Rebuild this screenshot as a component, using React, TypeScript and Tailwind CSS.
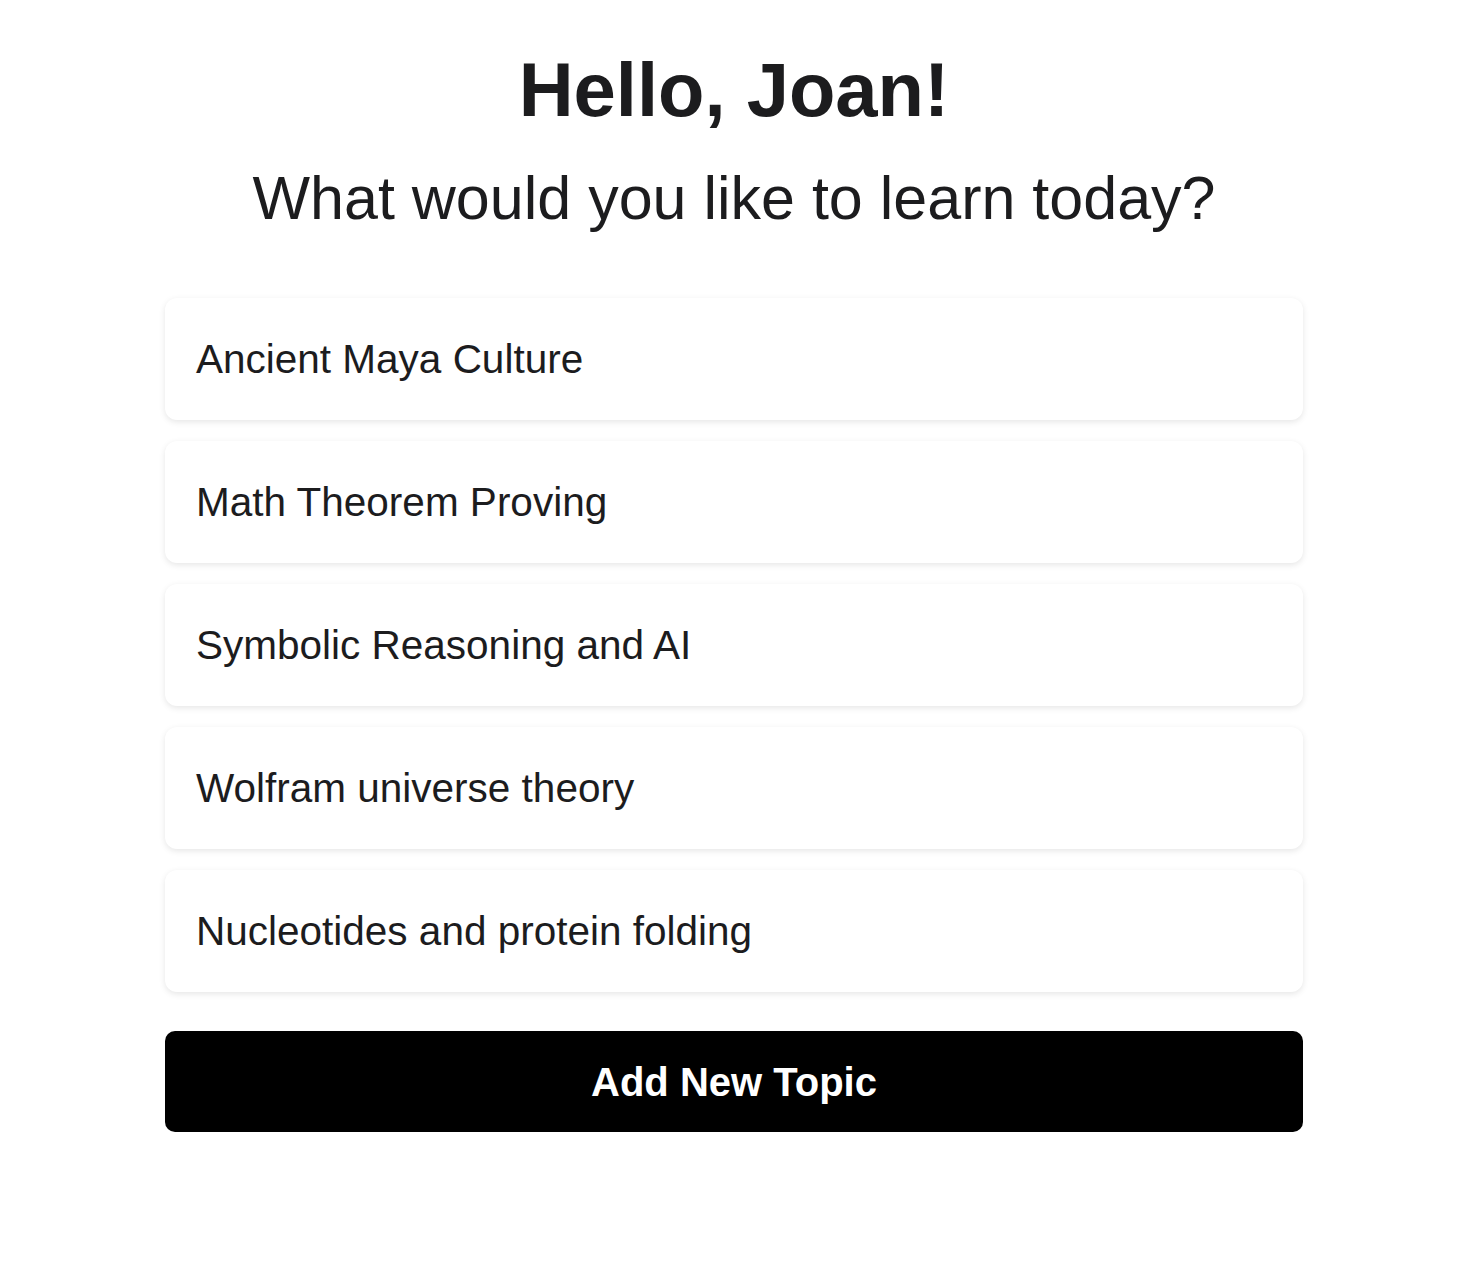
import React from "react";

const topics = [
  "Ancient Maya Culture",
  "Math Theorem Proving",
  "Symbolic Reasoning and AI",
  "Wolfram universe theory",
  "Nucleotides and protein folding",
];

export default function App() {
  return (
    <div
      className="min-h-[1276px] w-full bg-white text-[#1c1c1e]"
      style={{ fontFamily: '"Liberation Sans", Arial, sans-serif' }}
    >
      <div className="w-[1468px] flex flex-col items-center pt-[48px]">
        <h1 className="text-[76px] font-bold leading-[84px]">Hello, Joan!</h1>
        <p className="mt-[30px] text-[61px] leading-[72px]">What would you like to learn today?</p>
        <div className="mt-[64px] w-[1138px] flex flex-col gap-[21px]">
          {topics.map((t) => (
            <div
              key={t}
              className="h-[122px] rounded-[12px] bg-white flex items-center px-[31px] text-[40.5px] shadow-[0_2px_6px_rgba(0,0,0,0.1)]"
            >
              {t}
            </div>
          ))}
          <button className="mt-[18px] h-[101px] rounded-[10px] bg-black text-white text-[40px] font-bold">
            Add New Topic
          </button>
        </div>
      </div>
    </div>
  );
}
